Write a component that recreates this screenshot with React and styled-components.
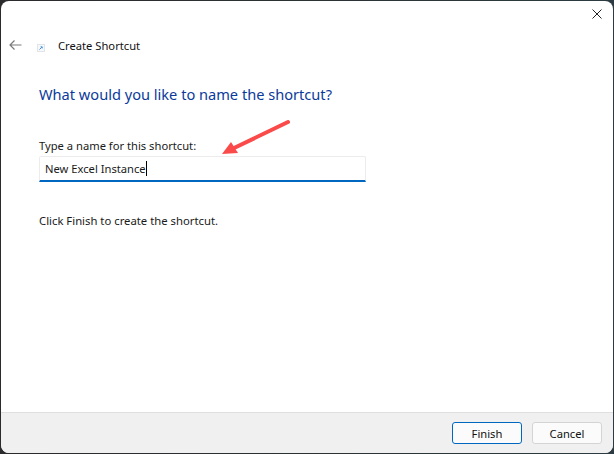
import React from "react";
import styled, { createGlobalStyle } from "styled-components";

const Global = createGlobalStyle`
  html, body { margin: 0; padding: 0; background: #2a2f30; }
  body { font-family: "Noto Sans", "Open Sans", sans-serif; }
  #root { width: 614px; height: 454px; overflow: hidden; }
`;

const Desktop = styled.div`
  width: 614px;
  height: 454px;
  padding: 1px;
  box-sizing: border-box;
  background: linear-gradient(90deg, #2b2a2c, #2b3436 60%, #2c3c42);
`;

const Dialog = styled.div`
  position: relative;
  height: 100%;
  display: flex;
  flex-direction: column;
  background: #fff;
  border-radius: 8px;
  overflow: hidden;
`;

const CloseRow = styled.div`
  height: 29px;
  box-sizing: border-box;
  display: flex;
  justify-content: flex-end;
  padding: 8px 11px 0 0;
`;

const Header = styled.div`
  display: flex;
  align-items: center;
  height: 30px;
  padding-left: 8px;
`;

const BackButton = styled.div`
  width: 14px;
  height: 12px;
  display: flex;
  margin-right: 14px;
`;

const TitleIcon = styled.div`
  width: 8px;
  height: 8px;
  display: flex;
  margin-top: 6px;
  margin-right: 13px;
`;

const Title = styled.div`
  font-size: 11.2px;
  color: #111;
`;

const Content = styled.div`
  flex: 1;
  padding: 23px 0 0 38px;
`;

const Heading = styled.h1`
  margin: 0;
  font-size: 14.6px;
  font-weight: 400;
  line-height: 22px;
  color: #0a3a9c;
`;

const Label = styled.div`
  margin-top: 33px;
  font-size: 11.2px;
  line-height: 16px;
  color: #1a1a1a;
`;

const Field = styled.div`
  width: 327px;
  height: 26px;
  margin-top: 2px;
  box-sizing: border-box;
  padding-left: 5px;
  display: flex;
  align-items: center;
  background: #fff;
  border: 1px solid #ececec;
  border-bottom: 2px solid #0067c0;
  border-radius: 2px 2px 0 0;
  font-size: 11.2px;
  color: #1a1a1a;
`;

const Caret = styled.span`
  width: 1px;
  height: 15px;
  background: #000;
`;

const Hint = styled.div`
  margin-top: 31px;
  font-size: 11.3px;
  line-height: 16px;
  color: #1a1a1a;
`;

const Footer = styled.div`
  height: 40px;
  display: flex;
  justify-content: flex-end;
  align-items: center;
  gap: 10px;
  padding-right: 11px;
  background: #f0f0f0;
  border-top: 1px solid #dfdfdf;
`;

const Button = styled.button`
  width: 70px;
  height: 22px;
  padding: 0;
  font-family: inherit;
  font-size: 11.2px;
  color: #111;
  background: #fbfbfb;
  border: 1px solid ${(p) => (p.$primary ? "#0067c0" : "#d4d4d4")};
  border-radius: 3px;
`;

const Annotation = styled.svg`
  position: absolute;
  left: 215px;
  top: 114px;
`;

function App() {
  return (
    <>
      <Global />
      <Desktop>
        <Dialog>
          <CloseRow>
            <svg width="10" height="10" viewBox="0 0 10 10">
              <path d="M0.5 0.5 L9.5 9.5 M9.5 0.5 L0.5 9.5" stroke="#222" strokeWidth="1" fill="none" />
            </svg>
          </CloseRow>
          <Header>
            <BackButton>
              <svg width="13" height="12" viewBox="0 0 13 12">
                <path d="M12.5 6 H1 M5.5 1.5 L1 6 L5.5 10.5" stroke="#7a7a7a" strokeWidth="1.2" fill="none" />
              </svg>
            </BackButton>
            <TitleIcon>
              <svg width="8" height="8" viewBox="0 0 8 8">
                <rect x="0.5" y="0.5" width="7" height="7" fill="#f7f8fa" stroke="#e1e4e8" />
                <path d="M2.5 5.5 L4.8 3.2 M3.6 2.8 H5.2 V4.4" stroke="#3d8fdc" strokeWidth="1" fill="none" />
              </svg>
            </TitleIcon>
            <Title>Create Shortcut</Title>
          </Header>
          <Content>
            <Heading>What would you like to name the shortcut?</Heading>
            <Label>Type a name for this shortcut:</Label>
            <Field>
              New Excel Instance
              <Caret />
            </Field>
            <Hint>Click Finish to create the shortcut.</Hint>
          </Content>
          <Footer>
            <Button $primary>Finish</Button>
            <Button>Cancel</Button>
          </Footer>
          <Annotation width="80" height="50" viewBox="0 0 80 50">
            <path d="M72 7 L16 34" stroke="#fb4a4a" strokeWidth="4" strokeLinecap="round" fill="none" />
            <path d="M6 39 L15 27 L22 38 Z" fill="#fb4a4a" />
          </Annotation>
        </Dialog>
      </Desktop>
    </>
  );
}

export default App;
